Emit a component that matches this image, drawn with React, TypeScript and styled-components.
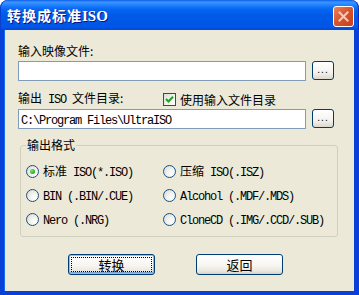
import React from 'react';
import styled, { createGlobalStyle } from 'styled-components';

const GlobalStyle = createGlobalStyle`
  html, body {
    margin: 0;
    padding: 0;
    background: #ffffff;
  }
  * {
    box-sizing: border-box;
  }
`;

const Window = styled.div`
  width: 359px;
  height: 295px;
  display: flex;
  flex-direction: column;
  font-family: 'Noto Sans CJK SC', sans-serif;
  font-size: 12px;
  color: #000;
`;

const TitleBar = styled.div`
  height: 30px;
  flex: none;
  display: flex;
  align-items: center;
  justify-content: space-between;
  padding: 0 5px 0 7px;
  border-radius: 8px 8px 0 0;
  background: linear-gradient(
    to bottom,
    #0a5ee8 0%,
    #3d95ff 7%,
    #2b8bff 13%,
    #1576fa 22%,
    #0565f0 32%,
    #005ae8 50%,
    #0057e6 75%,
    #0056e8 90%,
    #0347d0 100%
  );
  box-shadow: inset 1px 0 #0a3fd0, inset -1px 0 #0a2fc0;
`;

const Title = styled.span`
  color: #fff;
  font-weight: bold;
  font-size: 14px;
  letter-spacing: 1px;
  text-shadow: 1px 1px #0a1883;
`;

const TitleLatin = styled.span`
  font-family: 'Liberation Serif', serif;
  font-size: 15px;
  letter-spacing: 0;
`;

const CloseButton = styled.div`
  width: 21px;
  height: 21px;
  border: 1px solid #fff;
  border-radius: 3px;
  background: linear-gradient(135deg, #e8835f 0%, #d9552e 45%, #c8401a 100%);
  display: flex;
  align-items: center;
  justify-content: center;
  margin-top: 3px;
`;

const Body = styled.div`
  flex: 1;
  background: #ece9d8;
  border: 4px solid #0841d8;
  border-top: none;
  box-shadow: inset 1px 0 #166aee, inset -1px 0 #0a3fcf;
  padding: 0 21px 0 14px;
  display: flex;
  flex-direction: column;
`;

const Label = styled.div<{ $top: number }>`
  height: 14px;
  line-height: 14px;
  margin-top: ${(p) => p.$top}px;
  white-space: nowrap;
`;

const Mono = styled.span`
  font-family: 'Liberation Mono', monospace;
  font-size: 12px;
  letter-spacing: -1.2px;
  white-space: pre;
`;

const PathRow = styled.div`
  display: flex;
  gap: 6px;
  align-items: flex-start;
  margin-top: 3px;
`;

const TextBox = styled.div`
  width: 288px;
  height: 20px;
  border: 1px solid #7f9db9;
  background: #fff;
  padding: 0 2px;
  line-height: 18px;
  white-space: nowrap;
  overflow: hidden;
`;

const BrowseButton = styled.div`
  width: 22px;
  height: 19px;
  border: 1px solid #003c74;
  border-radius: 3px;
  background: linear-gradient(to bottom, #ffffff 0%, #f4f3ee 60%, #dcd8cb 100%);
  font-family: 'Liberation Sans', sans-serif;
  font-size: 10px;
  line-height: 15px;
  text-align: center;
  letter-spacing: 1px;
`;

const OptionRow = styled.div`
  display: flex;
  align-items: center;
  height: 14px;
  margin-top: 11px;
`;

const OptionLabel = styled.div`
  width: 145px;
  line-height: 14px;
  white-space: nowrap;
`;

const CheckBox = styled.div`
  width: 13px;
  height: 13px;
  border: 1px solid #1c5180;
  background: linear-gradient(135deg, #dcdcd7 0%, #f4f4f0 60%, #ffffff 100%);
  display: flex;
  align-items: center;
  justify-content: center;
  margin-right: 4px;
`;

const Group = styled.fieldset`
  width: 318px;
  margin: 9px 0 0 2px;
  padding: 7px 0 5px 5px;
  border: 1px solid #d0d0bf;
  border-radius: 3px;
  min-inline-size: 0;
`;

const Legend = styled.legend`
  padding: 0 1px;
  line-height: 14px;
  font-size: 12px;
`;

const RadioGrid = styled.div`
  display: grid;
  grid-template-columns: 137px 1fr;
  grid-auto-rows: 24px;
`;

const RadioItem = styled.div`
  display: flex;
  align-items: center;
  white-space: nowrap;
`;

const RadioCircle = styled.div<{ $checked?: boolean }>`
  width: 13px;
  height: 13px;
  border-radius: 50%;
  border: 1px solid #1c5180;
  background: radial-gradient(circle at 70% 70%, #ffffff 0%, #f2f2ee 40%, #d6d5cd 100%);
  display: flex;
  align-items: center;
  justify-content: center;
  margin-right: 4px;
  flex: none;

  &::after {
    content: '';
    display: ${(p) => (p.$checked ? 'block' : 'none')};
    width: 5px;
    height: 5px;
    border-radius: 50%;
    background: radial-gradient(circle at 35% 35%, #7fe07a 0%, #2fb52a 60%, #1a8f18 100%);
  }
`;

const ButtonRow = styled.div`
  display: flex;
  gap: 41px;
  margin: 17px 0 0 50px;
`;

const Button = styled.div<{ $default?: boolean }>`
  width: 87px;
  height: 21px;
  border: 1px solid #003c74;
  border-radius: 3px;
  background: linear-gradient(to bottom, #ffffff 0%, #f6f5f0 55%, #e9e7dd 85%, #d6d0c5 100%);
  box-shadow: ${(p) => (p.$default ? 'inset 0 0 0 1px #9db9eb, inset 0 -1px 0 1px #7da2ce' : 'none')};
  outline: ${(p) => (p.$default ? '1px dotted #000' : 'none')};
  outline-offset: -4px;
  text-align: center;
  line-height: 19px;
  font-size: 13px;
`;

const radios: { label: React.ReactNode; checked?: boolean }[] = [
  { label: <>标准<Mono> ISO(*.ISO)</Mono></>, checked: true },
  { label: <>压缩<Mono> ISO(.ISZ)</Mono></> },
  { label: <Mono>BIN (.BIN/.CUE)</Mono> },
  { label: <Mono>Alcohol (.MDF/.MDS)</Mono> },
  { label: <Mono>Nero (.NRG)</Mono> },
  { label: <Mono>CloneCD (.IMG/.CCD/.SUB)</Mono> },
];

export default function App() {
  return (
    <>
      <GlobalStyle />
      <Window>
        <TitleBar>
          <Title>
            转换成标准<TitleLatin>ISO</TitleLatin>
          </Title>
          <CloseButton>
            <svg width="11" height="11" viewBox="0 0 11 11">
              <path d="M1.5 1.5 L9.5 9.5 M9.5 1.5 L1.5 9.5" stroke="#f6c8b8" strokeWidth="2" strokeLinecap="square" />
            </svg>
          </CloseButton>
        </TitleBar>
        <Body>
          <Label $top={14}>输入映像文件:</Label>
          <PathRow>
            <TextBox />
            <BrowseButton>...</BrowseButton>
          </PathRow>
          <OptionRow>
            <OptionLabel>
              输出<Mono> ISO </Mono>文件目录:
            </OptionLabel>
            <CheckBox>
              <svg width="9" height="9" viewBox="0 0 9 9">
                <path d="M1 4 L3.5 6.5 L8 1.8" stroke="#21a121" strokeWidth="2" fill="none" />
              </svg>
            </CheckBox>
            <span>使用输入文件目录</span>
          </OptionRow>
          <PathRow>
            <TextBox>
              <Mono>C:\Program Files\UltraISO</Mono>
            </TextBox>
            <BrowseButton>...</BrowseButton>
          </PathRow>
          <Group>
            <Legend>输出格式</Legend>
            <RadioGrid>
              {radios.map((r, i) => (
                <RadioItem key={i}>
                  <RadioCircle $checked={r.checked} />
                  <span>{r.label}</span>
                </RadioItem>
              ))}
            </RadioGrid>
          </Group>
          <ButtonRow>
            <Button $default>转换</Button>
            <Button>返回</Button>
          </ButtonRow>
        </Body>
      </Window>
    </>
  );
}
